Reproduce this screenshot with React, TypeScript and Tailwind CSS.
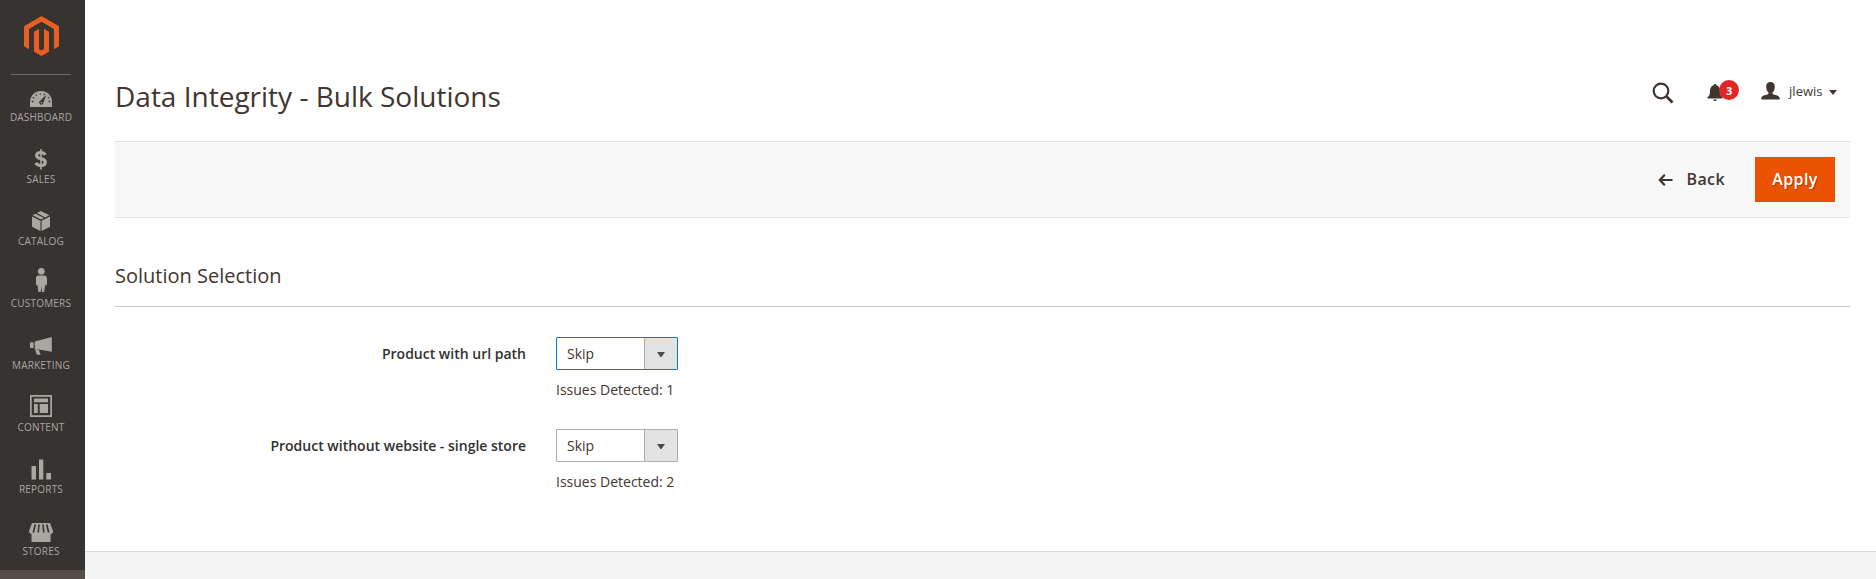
import type { ReactNode } from 'react';

type MenuItem = { label: string; icon: ReactNode };

const menu: MenuItem[] = [
  {
    label: 'Dashboard',
    icon: (
      <>
        <path d="M1 26V21C1 14.500 6 10 12 10S23 14.500 23 21V26Z" />
        <g stroke="#373330" strokeWidth="1.300" strokeLinecap="round" fill="none">
          <path d="M3.200 20.500h.8M4.300 16.600l.5.300M7.200 13.900l.2.300M11.300 12.800v.2M20 20.500h.8M19.300 16.800l.3-.2M15.200 13.400l.1-.2" />
        </g>
        <path d="M17.500 13.500L14.200 22.200A2 2 0 1 1 11 20Z" fill="#373330" />
        <circle cx="12.500" cy="21.600" r=".8" />
      </>
    ),
  },
  {
    label: 'Sales',
    icon: (
      <>
        <path
          d="M16.300 11.800C15.400 10.400 14 9.500 11.800 9.500C9.200 9.500 7.600 10.600 7.600 12.400C7.600 16.700 16.300 14.300 16.300 19.200C16.300 21.300 14.500 22.500 12 22.500C9.500 22.500 7.900 21.500 6.800 19.800"
          fill="none"
          stroke="currentColor"
          strokeWidth="3.200"
        />
        <path d="M11.200 6h1.600v20.500h-1.600z" />
      </>
    ),
  },
  {
    label: 'Catalog',
    icon: (
      <>
        <path d="M3 11.600L11.500 15.800V26L3 21.700ZM12.600 15.800L21 11.600V21.700L12.600 26Z" />
        <path d="M3.600 10.300L6.500 8.800L15 13L12 14.600ZM7.800 8.100L11.900 6L20.400 10.300L16.300 12.400Z" />
      </>
    ),
  },
  {
    label: 'Customers',
    icon: (
      <>
        <circle cx="12.300" cy="4.300" r="3.400" />
        <path d="M9.300 8.500H15.300C17.200 8.500 18 9.700 18 11.500V17.300C18 18.700 16.600 18.700 16.300 17.500L15.200 25H13L12.400 19.500L11.700 25H9.500L8.400 17.500C8.100 18.700 7 18.700 7 17.300V11.500C7 9.700 7.600 8.500 9.300 8.500Z" />
      </>
    ),
  },
  {
    label: 'Marketing',
    icon: (
      <>
        <path d="M1.300 13.300H4.500V19H1.300L1 17V15ZM5.700 12.500L22.800 8V22.700L5.700 19.700Z" />
        <path d="M6 20L10 20.700L10.300 22.500L11.700 25.500L9 26L7.500 25Z" />
      </>
    ),
  },
  {
    label: 'Content',
    icon: (
      <>
        <path d="M1 4H23V26H1ZM2.700 5.700V24.300H21.300V5.700Z" fillRule="evenodd" />
        <path d="M5 7.500H19V11.300H5ZM5 13H8.700V22H5ZM10.700 13H19V22H10.700Z" />
      </>
    ),
  },
  { label: 'Reports', icon: <path d="M2.500 13H7V26.500H2.500ZM10 6.500H14.300V26.500H10ZM17.300 20H22V26.500H17.300Z" /> },
  {
    label: 'Stores',
    icon: (
      <>
        <path d="M3 8H21L24 16V17.500Q22.500 19 21.600 19V27H2.500V19Q1 19 0 17V16Z" />
        <path
          d="M6.300 9.500L4.300 17.500M10 9.500L9.200 17.500M14 9.500L14.800 17.500M17.700 9.500L19.700 17.500"
          stroke="#373330"
          strokeWidth="1.600"
          fill="none"
        />
      </>
    ),
  },
];

function Sidebar() {
  return (
    <aside className="flex h-full w-[85px] shrink-0 flex-col overflow-hidden bg-[#373330]">
      <div className="flex h-[74px] w-[83px] shrink-0 justify-center pt-[16px]">
        <svg viewBox="0 0 35 40" className="h-10 w-[35px] text-[#eb5e23]" fill="currentColor">
          <path d="M17.500 0L35 10.200V30.300L30 33.200V13L17.500 5.800L5 13V33.200L0 30.300V10.200Z" />
          <path d="M10 15.700L15 12.800V33L17.500 34.500L20 33V12.800L25 15.700V35.800L17.500 40L10 35.800Z" />
        </svg>
      </div>
      <nav className="relative flex w-[82px] flex-col">
        <div className="absolute left-[11px] top-0 h-px w-[60px] bg-[#736963]" />
        {menu.map((item) => (
          <a key={item.label} className="flex h-[62px] flex-col items-center pt-[7px] text-[#aaa6a0]">
            <svg viewBox="0 0 24 28" className="h-7 w-6 shrink-0" fill="currentColor">
              {item.icon}
            </svg>
            <span className="mt-0.5 text-[10px] uppercase leading-[13px] tracking-[0.2px]">{item.label}</span>
          </a>
        ))}
      </nav>
      <div className="h-[9px] shrink-0 bg-[#524d49]" />
    </aside>
  );
}

function Header() {
  return (
    <header className="flex h-[141px] items-start justify-between">
      <h1 className="mt-[77px] text-[28px] leading-[38px] text-[#41362f]">Data Integrity - Bulk Solutions</h1>
      <div className="mt-[79px] flex h-6 items-center text-[#41362f]">
        <svg viewBox="0 0 22 22" className="mt-1 h-[22px] w-[22px]" fill="none" stroke="currentColor">
          <circle cx="9" cy="9" r="7.300" strokeWidth="2.200" />
          <path d="M14.200 14.200L20.500 20.500" strokeWidth="2.800" />
        </svg>
        <div className="relative ml-[33px] h-6 w-8">
          <svg viewBox="0 0 16 18" className="absolute left-0 top-[5px] h-[18px] w-4" fill="currentColor">
            <path d="M8 0C8.900 0 9.300.6 9.300 1.200C12 2 13 4.200 13 7C13 10.500 13.800 12 15.500 13.200V14.500H.5V13.200C2.200 12 3 10.500 3 7C3 4.200 4 2 6.700 1.200C6.700.6 7.100 0 8 0ZM6.300 15.600H9.700C9.500 16.600 9 17.100 8 17.100S6.500 16.600 6.300 15.600Z" />
          </svg>
          <span className="absolute left-3 top-[1px] flex h-5 w-5 items-center justify-center rounded-full bg-[#e22626] text-[11px] font-bold leading-none text-white">
            3
          </span>
        </div>
        <svg viewBox="0 0 19 18" className="ml-[22px] h-[18px] w-[19px]" fill="currentColor">
          <path d="M9.500 0C12.300 0 13.800 1.700 13.800 4.500C13.800 7.500 12.800 9.300 11.600 10.300V12C13 13 18.700 13.300 18.700 16V17.500H.3V16C.3 13.300 6 13 7.400 12V10.300C6.200 9.300 5.200 7.500 5.200 4.500C5.200 1.700 6.700 0 9.500 0Z" />
        </svg>
        <span className="ml-[9px] text-[13px] leading-6">jlewis</span>
        <svg viewBox="0 0 8 5" className="ml-[6px] mt-0.5 h-[5px] w-2" fill="currentColor">
          <path d="M0 0H8L4 5Z" />
        </svg>
      </div>
    </header>
  );
}

function Field({ label, count, focused }: { label: string; count: number; focused?: boolean }) {
  return (
    <div className="flex h-[92px] items-start">
      <label className="w-[411px] text-right text-sm font-semibold leading-[33px] text-[#303030]">{label}</label>
      <div className="ml-[30px] text-sm text-[#41362f]">
        <button
          className={`flex h-[33px] w-[122px] overflow-hidden rounded-[1px] border bg-white ${
            focused ? 'border-[#007bdb]' : 'border-[#adadad]'
          }`}
        >
          <span className="flex-1 pl-[10px] text-left leading-[31px] text-[#41362f]">Skip</span>
          <span className="flex h-full w-[33px] items-center justify-center border-l border-[#adadad] bg-[#e3e3e3]">
            <svg viewBox="0 0 8 5" className="mt-0.5 h-[5px] w-2" fill="#514943">
              <path d="M0 0H8L4.500 5H3.500Z" />
            </svg>
          </span>
        </button>
        <p className="mt-[10px] leading-5">Issues Detected: {count}</p>
      </div>
    </div>
  );
}

export default function App() {
  return (
    <div className="flex h-[579px] w-full overflow-hidden bg-white font-['Open_Sans','Noto_Sans',sans-serif]">
      <Sidebar />
      <div className="flex min-w-0 flex-1 flex-col">
        <div className="pl-[30px] pr-[26px]">
          <div className="pr-[13.5px]">
            <Header />
          </div>
          <div className="flex h-[77px] items-center justify-end border-y border-[#e3e3e3] bg-[#f8f8f8] pr-[15px] text-base font-semibold tracking-[0.025em] text-[#41362f]">
            <svg viewBox="0 0 15 12" className="h-3 w-[15px]" fill="none" stroke="currentColor" strokeWidth="2.200">
              <path d="M14.500 6H1.800M6.800 .8L1.800 6L6.800 11.200" />
            </svg>
            <span className="ml-[13px] pb-0.5">Back</span>
            <button className="ml-[30px] h-[45px] w-20 bg-[#eb5202] pb-0.5 text-white [text-shadow:1px_1px_0_rgba(0,0,0,0.25)]">
              Apply
            </button>
          </div>
          <h2 className="h-[89px] border-b border-[#cacaca] pt-[44px] text-xl leading-[28px] text-[#41362f]">
            Solution Selection
          </h2>
          <form className="pt-[30px]">
            <Field label="Product with url path" count={1} focused />
            <Field label="Product without website - single store" count={2} />
          </form>
        </div>
        <footer className="mt-[30px] flex-1 border-t border-[#dadada] bg-[#f4f4f4]" />
      </div>
    </div>
  );
}
